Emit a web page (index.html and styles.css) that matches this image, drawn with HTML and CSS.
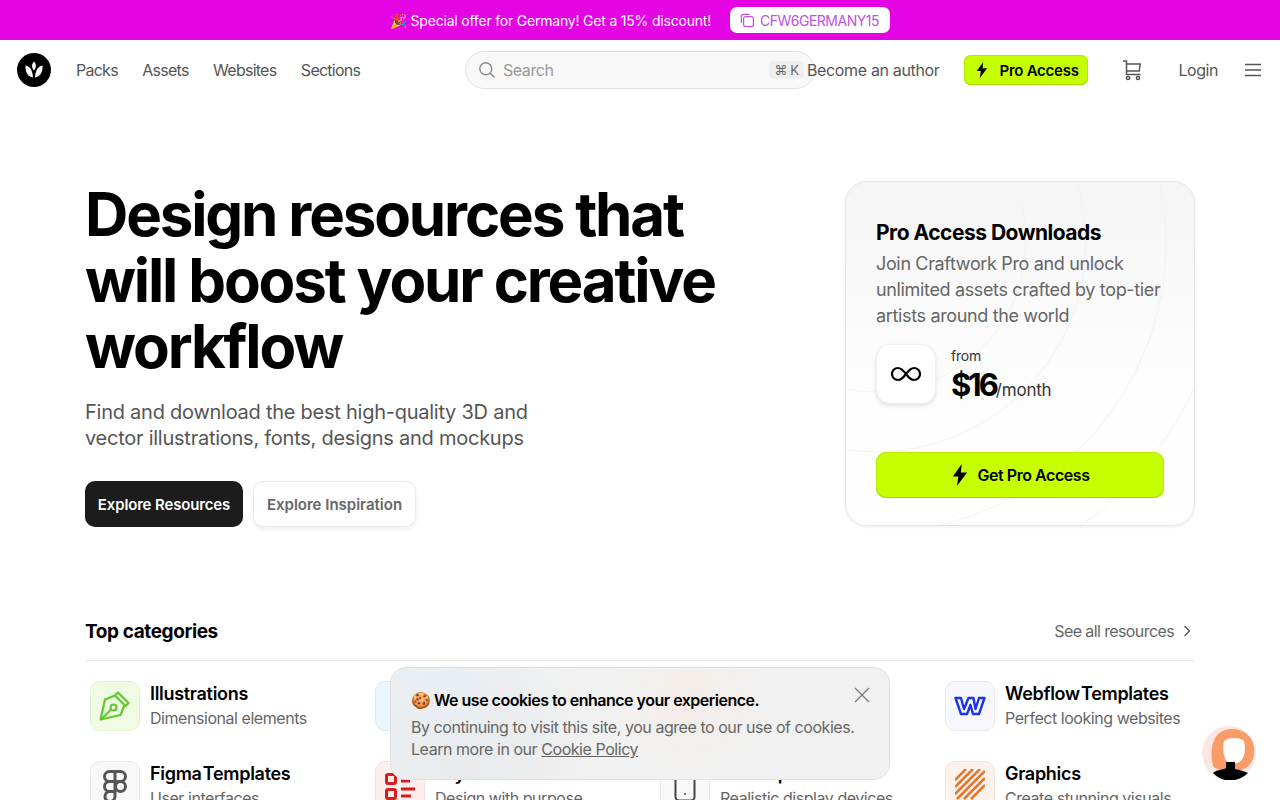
FILE: index.html
```html
<!DOCTYPE html>
<html lang="en">
<head>
  <meta charset="UTF-8">
  <title>Craftwork</title>
  <link rel="stylesheet" href="styles.css">
</head>
<body>

  <div class="promo">
    <span>🎉 Special offer for Germany! Get a 15% discount!</span>
    <button class="promo-code">
      <svg width="15" height="15" viewBox="0 0 15 15" fill="none" stroke="#c052e0" stroke-width="1.2"><rect x="3.6" y="3.6" width="9.8" height="10" rx="2"/><path d="M1.4 10V3.4a2 2 0 0 1 2-2h6.4"/></svg>
      CFW6GERMANY15
    </button>
  </div>

  <header class="topbar">
    <a class="logo">
      <svg width="34" height="34" viewBox="0 0 34 34"><circle cx="17" cy="17" r="17" fill="#000"/><path d="M17 8.500c2.300 2.500 2.800 5.500 0 9-2.800-3.500-2.300-6.500 0-9zM8.500 12.500c3.800.8 7 3.500 7.500 12C11 24 8 19 8.500 12.500zM25.500 12.500c-3.800.8-7 3.500-7.500 12C23 24 26 19 25.500 12.500z" fill="#fff"/></svg>
    </a>
    <nav class="mainnav">
      <a>Packs</a>
      <a>Assets</a>
      <a>Websites</a>
      <a>Sections</a>
    </nav>
    <div class="search">
      <svg width="18" height="18" viewBox="0 0 18 18" fill="none" stroke="#8a8a8a" stroke-width="1.4"><circle cx="7.800" cy="7.800" r="6"/><path d="M12.300 12.300l4.200 4.200"/></svg>
      <span>Search</span>
      <kbd>⌘ K</kbd>
    </div>
    <a class="author">Become an author</a>
    <a class="pro-btn">
      <svg width="12" height="16" viewBox="0 0 12 16"><path d="M7.300 0L0.800 9h4l-1 7 7.400-9.800H6.600z" fill="#000"/></svg>
      Pro Access
    </a>
    <svg class="cart" width="22" height="22" viewBox="0 0 22 22" fill="none" stroke="#555" stroke-width="1.500"><path d="M2 2h3.500v13.500h14M5.500 5h13.700l-1 7H5.500"/><circle cx="7" cy="19" r="1.600"/><circle cx="17" cy="19" r="1.600"/></svg>
    <a class="login">Login</a>
    <svg class="burger" width="16" height="14" viewBox="0 0 16 14" stroke="#555" stroke-width="1.400"><path d="M0 1.500h16M0 7h16M0 12.500h16"/></svg>
  </header>

  <section class="hero">
    <div class="hero-left">
      <h1>Design resources that will boost your creative workflow</h1>
      <p>Find and download the best high-quality 3D and vector illustrations, fonts, designs and mockups</p>
      <div class="hero-btns">
        <a class="btn-dark">Explore Resources</a>
        <a class="btn-light">Explore Inspiration</a>
      </div>
    </div>

    <aside class="pro-card">
      <svg class="rings" width="350" height="345" viewBox="0 0 350 345" fill="none" stroke="#f2f2f2"><circle cx="30" cy="60" r="150"/><circle cx="30" cy="60" r="210"/><circle cx="30" cy="60" r="290"/><circle cx="30" cy="60" r="350"/></svg>
      <h3>Pro Access Downloads</h3>
      <p>Join Craftwork Pro and unlock unlimited assets crafted by top-tier artists around the world</p>
      <div class="price-row">
        <div class="infinity">
          <svg width="30" height="16" viewBox="0 0 30 16" fill="none" stroke="#000" stroke-width="2.200"><path d="M15 8c-3-4-5.500-6-8-6a6 6 0 0 0 0 12c2.500 0 5-2 8-6s5.500-6 8-6a6 6 0 0 1 0 12c-2.500 0-5-2-8-6z"/></svg>
        </div>
        <div class="price">
          <span class="from">from</span>
          <div><strong>$16</strong><span class="per">/month</span></div>
        </div>
      </div>
      <a class="get-pro">
        <svg width="18" height="22" viewBox="0 0 12 16"><path d="M7.300 0L0.800 9h4l-1 7 7.400-9.800H6.600z" fill="#000"/></svg>
        Get Pro Access
      </a>
    </aside>
  </section>

  <section class="categories">
    <div class="cat-head">
      <h2>Top categories</h2>
      <a class="see-all">See all resources
        <svg width="8" height="12" viewBox="0 0 8 12" fill="none" stroke="#555" stroke-width="1.400"><path d="M1.500 1l5 5-5 5"/></svg>
      </a>
    </div>
    <div class="cat-grid">
      <div class="cat">
        <div class="cat-icon green">
          <svg width="34" height="34" viewBox="0 0 34 34" fill="none" stroke="#62c82d" stroke-width="2.200" stroke-linejoin="round"><path d="M20 3.500l10.500 10.500-3 3-10.500-10.500zM17 6.500l-10 4-4.500 20 20-4.500 4-10"/><circle cx="15.500" cy="18.500" r="3"/><path d="M3 30.500l10.200-10"/></svg>
        </div>
        <div><h4>Illustrations</h4><span>Dimensional elements</span></div>
      </div>
      <div class="cat">
        <div class="cat-icon blue">
          <svg width="30" height="30" viewBox="0 0 30 30" fill="none" stroke="#79bde8" stroke-width="2.500"><path d="M6 5h18M15 5v20"/></svg>
        </div>
        <div><h4>Fonts</h4><span>Creative typography</span></div>
      </div>
      <div class="cat">
        <div class="cat-icon orange">
          <svg width="30" height="30" viewBox="0 0 30 30" fill="none" stroke="#e8a05a" stroke-width="2.500"><path d="M15 3l11 6v12l-11 6-11-6V9z"/></svg>
        </div>
        <div><h4>3D Assets</h4><span>Ready-made 3D</span></div>
      </div>
      <div class="cat">
        <div class="cat-icon indigo">
          <svg width="32" height="22" viewBox="0 0 32 22" fill="none" stroke="#1a35e8" stroke-width="2.400" stroke-linejoin="round"><path d="M1.500 3L7 3 10 14 14.500 3 19.500 3 21.500 14 25 3 30.500 3 25 19 19 19 16.500 10 13 19 7 19z"/></svg>
        </div>
        <div><h4>Webflow Templates</h4><span>Perfect looking websites</span></div>
      </div>
      <div class="cat">
        <div class="cat-icon grey">
          <svg width="26" height="34" viewBox="0 0 26 34" fill="none" stroke="#555" stroke-width="3"><path d="M13 2.500H7.500a5 5 0 0 0 0 10H13zM13 2.500h5.500a5 5 0 0 1 0 10H13zM13 12.500H7.500a5 5 0 0 0 0 10H13zM13 22.500H7.500a5 5 0 1 0 5.500 5z"/><circle cx="18.500" cy="17.500" r="5"/></svg>
        </div>
        <div><h4>Figma Templates</h4><span>User interfaces</span></div>
      </div>
      <div class="cat">
        <div class="cat-icon red">
          <svg width="30" height="34" viewBox="0 0 30 34" fill="none" stroke="#dc1c1c" stroke-width="3"><rect x="1.500" y="5.500" width="9" height="9" rx="1.500"/><rect x="1.500" y="20.500" width="9" height="9" rx="1.500"/><path d="M16 12h9M16 20h14M16 27h10"/></svg>
        </div>
        <div><h4>Layouts</h4><span>Design with purpose</span></div>
      </div>
      <div class="cat">
        <div class="cat-icon grey">
          <svg width="22" height="34" viewBox="0 0 22 34" fill="none" stroke="#444" stroke-width="2"><rect x="1.500" y="1.500" width="19" height="30" rx="3.500"/><circle cx="11" cy="25" r="1" fill="#444" stroke="none"/></svg>
        </div>
        <div><h4>Mockups</h4><span>Realistic display devices</span></div>
      </div>
      <div class="cat">
        <div class="cat-icon peach">
          <svg width="30" height="34" viewBox="0 0 30 34" fill="none" stroke="#e2762f" stroke-width="2.600"><path d="M0 11L11 0M0 18L18 0M0 25L25 0M2 30L30 2M9 30L30 9M16 30L30 16"/></svg>
        </div>
        <div><h4>Graphics</h4><span>Create stunning visuals</span></div>
      </div>
    </div>
  </section>

  <div class="cookie">
    <svg class="cookie-close" width="16" height="16" viewBox="0 0 16 16" stroke="#777" stroke-width="1.200"><path d="M1 1l14 14M15 1L1 15"/></svg>
    <h5>🍪 We use cookies to enhance your experience.</h5>
    <p>By continuing to visit this site, you agree to our use of cookies.<br>Learn more in our <u>Cookie Policy</u></p>
  </div>

  <div class="chat">
    <svg width="54" height="54" viewBox="0 0 54 54"><circle cx="27" cy="27" r="27" fill="#fbe6e2"/><path d="M11 40C7 20 12 3 30 3c16 0 24 13 22 25-1 8-5 14-16 17l-12-3c-6 2-10 2-13-2z" fill="#fa9c68"/><path d="M22 15c4-4 16-4 20 0 2 9 1 18-6 22H26c-4-4-6-13-4-22z" fill="#fff"/><path d="M11 47c5-4 9-3 13-5v-6h9v7c5 1 9 2 13 4-10 10-26 10-35 0z" fill="#000"/></svg>
  </div>

</body>
</html>
```

FILE: styles.css
```css
* {
  box-sizing: border-box;
}

html, body {
  height: 100%;
  overflow: hidden;
}

body {
  margin: 0;
  background-color: white;
  color: #000;
  font-family: 'Inter', 'Liberation Sans', sans-serif;
  font-size: 16px;
  letter-spacing: -0.45px;
}

h1, h2, h3, h4, h5, p {
  margin: 0;
}

.promo {
  height: 40px;
  background-color: #e303e3;
  color: white;
  font-size: 14px;
  letter-spacing: -0.2px;
  display: flex;
  align-items: center;
  justify-content: center;
  gap: 19px;
}

.promo-code {
  height: 26px;
  width: 160px;
  display: flex;
  align-items: center;
  gap: 5px;
  padding: 0 0 0 10px;
  border: none;
  border-radius: 7px;
  background-color: white;
  color: #c052e0;
  font: inherit;
  font-size: 14px;
  letter-spacing: -0.5px;
}

.promo-code svg {
  flex-shrink: 0;
}

.topbar {
  height: 60px;
  display: flex;
  align-items: center;
  padding: 0 19px 0 17px;
  color: #555;
}

.logo {
  display: flex;
}

.mainnav {
  display: flex;
  gap: 24.5px;
  margin-left: 25px;
  letter-spacing: -0.75px;
}

.search {
  position: absolute;
  left: 465px;
  top: 51px;
  width: 350px;
  height: 38px;
  display: flex;
  align-items: center;
  gap: 7px;
  padding: 0 14px 0 12px;
  background-color: #f8f8f8;
  border: 1px solid #e2e2e2;
  border-radius: 19px;
  color: #999;
}

.search kbd {
  position: absolute;
  right: 10px;
  top: 9px;
  height: 18px;
  width: 35px;
  text-align: center;
  line-height: 18px;
  background-color: #efefef;
  border-radius: 5px;
  color: #666;
  font-family: inherit;
  font-size: 13px;
}

.author {
  margin-left: auto;
  position: relative;
  letter-spacing: -0.35px;
}

.pro-btn {
  display: flex;
  align-items: center;
  gap: 11px;
  width: 124px;
  height: 30px;
  margin-left: 25px;
  padding-left: 12px;
  background-color: #c6ff00;
  border-radius: 7px;
  box-shadow: inset 0 -1px 0 #a6d600, inset 0 0 0 1px #b4e800;
  color: #000;
  font-size: 15px;
  font-weight: 600;
  letter-spacing: -0.25px;
}

.cart {
  margin-left: 33px;
}

.login {
  margin-left: 35px;
}

.burger {
  margin-left: 27px;
}

.hero {
  display: flex;
  justify-content: space-between;
  padding: 81px 85px 0;
  height: 500px;
}

.hero-left {
  width: 650px;
}

h1 {
  font-size: 60px;
  line-height: 66px;
  font-weight: 700;
  letter-spacing: -2.15px;
}

.hero-left p {
  width: 470px;
  margin-top: 20px;
  color: #555;
  font-size: 20px;
  line-height: 26px;
  letter-spacing: -0.25px;
}

.hero-btns {
  display: flex;
  gap: 10px;
  margin-top: 30px;
}

.btn-dark, .btn-light {
  height: 46px;
  display: flex;
  align-items: center;
  border-radius: 10px;
  font-size: 15px;
  font-weight: 600;
}

.btn-dark {
  width: 158px;
  justify-content: center;
  background-color: #1c1c1c;
  color: white;
  letter-spacing: -0.15px;
}

.btn-light {
  width: 163px;
  justify-content: center;
  background-color: white;
  border: 1px solid #eaeaea;
  box-shadow: 0 2px 4px rgba(0,0,0,0.08);
  color: #666;
  letter-spacing: 0;
}

.pro-card {
  position: relative;
  overflow: hidden;
  width: 350px;
  height: 345px;
  padding: 37px 30px 0;
  background: linear-gradient(180deg, #f5f5f5 0%, #fcfcfc 50%, white 100%);
  border: 1px solid #e6e6e6;
  border-radius: 22px;
  box-shadow: 0 1px 3px rgba(0,0,0,0.08);
}

.rings {
  position: absolute;
  left: 0;
  top: 0;
}

.pro-card h3, .pro-card p, .price-row, .get-pro {
  position: relative;
}

.pro-card h3 {
  font-size: 21px;
  line-height: 28px;
  font-weight: 700;
  letter-spacing: -0.5px;
}

.pro-card p {
  margin-top: 4px;
  color: #666;
  font-size: 18px;
  line-height: 26px;
  letter-spacing: -0.35px;
}

.price-row {
  display: flex;
  gap: 15px;
  margin-top: 15px;
}

.infinity {
  width: 60px;
  height: 60px;
  display: flex;
  align-items: center;
  justify-content: center;
  background-color: white;
  border: 1px solid #eee;
  border-radius: 14px;
  box-shadow: 0 2px 4px rgba(0,0,0,0.1);
}

.from {
  display: block;
  color: #333;
  font-size: 14px;
  line-height: 24px;
  letter-spacing: -0.2px;
}

.price strong {
  font-size: 31px;
  line-height: 34px;
  letter-spacing: -3px;
}

.per {
  color: #333;
  font-size: 17px;
  letter-spacing: -0.2px;
}

.get-pro {
  display: flex;
  align-items: center;
  justify-content: center;
  gap: 9px;
  height: 46px;
  margin-top: 48px;
  background-color: #c6ff00;
  border-radius: 10px;
  box-shadow: inset 0 -1px 0 #a6d600, inset 0 0 0 1px #b9ee00;
  font-size: 16px;
  font-weight: 600;
}

.categories {
  padding: 0 85px;
}

.cat-head {
  display: flex;
  align-items: center;
  justify-content: space-between;
  height: 61px;
  padding-top: 2px;
  border-bottom: 1px solid #e5e5e5;
}

.cat-head h2 {
  font-size: 19px;
  font-weight: 700;
  letter-spacing: -0.4px;
}

.see-all {
  display: flex;
  align-items: center;
  gap: 9px;
  padding-right: 4px;
  color: #666;
  letter-spacing: -0.6px;
}

.cat-grid {
  display: grid;
  grid-template-columns: 285px 285px 285px 1fr;
  row-gap: 30px;
  padding: 20px 0 0 5px;
}

.cat {
  display: flex;
  gap: 10px;
}

.cat-icon {
  width: 50px;
  height: 50px;
  flex-shrink: 0;
  display: flex;
  align-items: center;
  justify-content: center;
  border: 1px solid #e9e9e9;
  border-radius: 10px;
}

.green { background-color: #f0fbe3; border-color: #e2f2d0; }
.blue { background-color: #eaf6fd; border-color: #d8ecf8; }
.orange { background-color: #fdf2e6; }
.indigo { background-color: #f6f7ff; }
.grey { background-color: #f8f8f8; }
.red { background-color: #fdeeee; border-color: #f8e0e0; }
.peach { background-color: #fdf1ec; border-color: #f5e4dc; }

.cat h4 {
  font-size: 18px;
  line-height: 25px;
  font-weight: 600;
  letter-spacing: -0.3px;
  word-spacing: -3px;
}

.cat span {
  color: #666;
  font-size: 16px;
  line-height: 24px;
}

.cookie {
  position: fixed;
  left: 390px;
  top: 667px;
  width: 500px;
  height: 113px;
  padding: 21px 20px 0;
  background:
    radial-gradient(circle at 10% 25%, #e8eef2 0%, rgba(232,238,242,0) 30%),
    radial-gradient(circle at 60% 30%, #f3ede8 0%, rgba(243,237,232,0) 25%),
    radial-gradient(circle at 15% 95%, #e8e8e8 0%, rgba(232,232,232,0) 30%),
    #f1f1f1;
  border: 1px solid #e0e0e0;
  border-radius: 16px;
}

.cookie h5 {
  font-size: 16px;
  line-height: 22px;
  font-weight: 600;
  letter-spacing: -0.5px;
}

.cookie p {
  margin-top: 5px;
  color: #666;
  font-size: 16px;
  line-height: 22px;
}

.cookie-close {
  position: absolute;
  right: 19px;
  top: 19px;
}

.chat {
  position: fixed;
  left: 1202px;
  top: 726px;
  width: 54px;
  height: 54px;
}
```
